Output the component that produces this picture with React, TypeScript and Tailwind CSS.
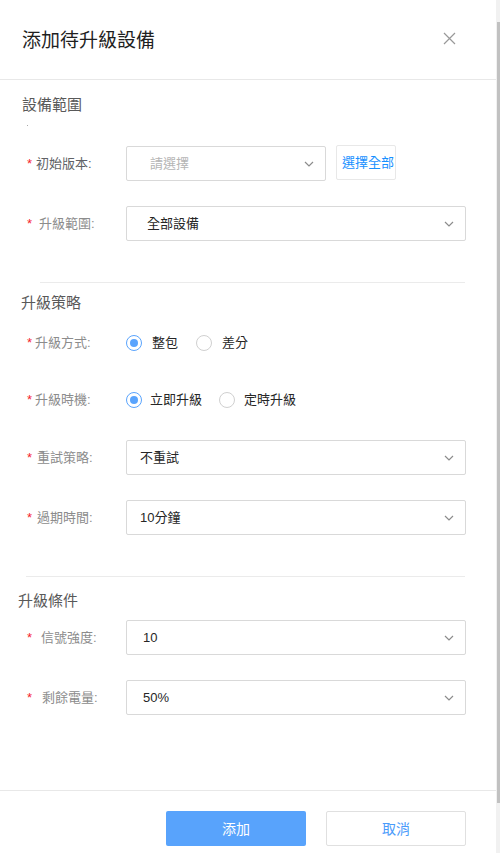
import React from 'react';

function Chevron() {
  return (
    <svg width="10" height="6" viewBox="0 0 10 6" className="shrink-0">
      <polyline points="1,1 5,5 9,1" fill="none" stroke="#8c8c8c" strokeWidth="1.2" />
    </svg>
  );
}

interface SelectProps { value: string; placeholder?: boolean; textPad?: string; width?: string; }

function Select({ value, placeholder, textPad = 'pl-[13px]', width = 'w-[340px]' }: SelectProps) {
  return (
    <div className={`${width} h-[35px] border border-[#d9d9d9] rounded-[2px] flex items-center justify-between pr-[11px] ${textPad}`}>
      <span className={`text-[13px] leading-[20px] ${placeholder ? 'text-[#b5b5b5]' : 'text-[#262626]'}`}>{value}</span>
      <Chevron />
    </div>
  );
}

function Label({ text, gap, dark }: { text: string; gap: string; dark?: boolean }) {
  return (
    <div className="w-[126px] pl-[27px] flex items-center shrink-0">
      <span className="text-[#f5222d] text-[13px] leading-[20px]">*</span>
      <span className={`${gap} text-[13px] leading-[20px] ${dark ? 'text-[#606266]' : 'text-[#8c8c8c]'}`}>{text}</span>
    </div>
  );
}

function Radio({ checked, label, gap = 'ml-[10px]' }: { checked?: boolean; label: string; gap?: string }) {
  return (
    <div className="flex items-center">
      <span
        className={`w-[16px] h-[16px] rounded-full border flex items-center justify-center ${checked ? 'border-[#5aa4fd]' : 'border-[#d0d0d0]'}`}
      >
        {checked && <span className="w-[8px] h-[8px] rounded-full bg-[#5aa4fd]" />}
      </span>
      <span className={`${gap} text-[13px] leading-[20px] text-[#262626]`}>{label}</span>
    </div>
  );
}

export default function App() {
  return (
    <div className="w-[500px] h-[853px] flex bg-white overflow-hidden font-['Liberation_Sans','Noto_Sans_CJK_TC',sans-serif]">
      <div className="w-[496px] h-[853px] flex flex-col">
        {/* Header */}
        <div className="h-[80px] border-b border-[#e8e8e8] flex items-start justify-between pl-[22px] pr-[40px] pt-[29px]">
          <h1 className="text-[19px] leading-[24px] text-[#1f1f1f]">添加待升級設備</h1>
          <svg width="13" height="13" viewBox="0 0 13 13" className="mt-[3px]">
            <path d="M1 1 L12 12 M12 1 L1 12" stroke="#999" strokeWidth="1.2" />
          </svg>
        </div>

        {/* 設備範圍 */}
        <div className="mt-[15px] pl-[22px] text-[15px] leading-[20px] text-[#595959]">設備範圍</div>
        <div className="ml-[27px] mt-[10px] w-[1px] h-[1px] bg-[#aaa]" />
        <div className="mt-[20px] flex items-center h-[35px]">
          <Label text="初始版本:" gap="ml-[4px]" dark />
          <Select value="請選擇" placeholder textPad="pl-[23px]" width="w-[200px]" />
          <button className="ml-[10px] -mt-[2px] w-[60px] h-[35px] border border-[#e8e8e8] rounded-[2px] text-[13px] text-[#1890ff] leading-[20px] pl-[5px] text-left">
            選擇全部
          </button>
        </div>
        <div className="mt-[25px] flex items-center h-[35px]">
          <Label text="升級範圍:" gap="ml-[7px]" />
          <Select value="全部設備" textPad="pl-[20px]" />
        </div>

        <div className="mt-[41px] ml-[40px] w-[425px] border-t border-[#ebebeb]" />

        {/* 升級策略 */}
        <div className="mt-[10px] pl-[21px] text-[15px] leading-[20px] text-[#595959]">升級策略</div>
        <div className="mt-[20px] flex items-center h-[20px]">
          <Label text="升級方式:" gap="ml-[3px]" />
          <div className="flex items-center gap-[18px]">
            <Radio checked label="整包" />
            <Radio label="差分" />
          </div>
        </div>
        <div className="mt-[37px] flex items-center h-[20px]">
          <Label text="升級時機:" gap="ml-[3px]" />
          <div className="flex items-center gap-[17px]">
            <Radio checked label="立即升級" gap="ml-[8px]" />
            <Radio label="定時升級" gap="ml-[9px]" />
          </div>
        </div>
        <div className="mt-[30px] flex items-center h-[35px]">
          <Label text="重試策略:" gap="ml-[5px]" />
          <Select value="不重試" />
        </div>
        <div className="mt-[25px] flex items-center h-[35px]">
          <Label text="過期時間:" gap="ml-[5px]" />
          <Select value="10分鐘" />
        </div>

        <div className="mt-[41px] ml-[26px] w-[439px] border-t border-[#ebebeb]" />

        {/* 升級條件 */}
        <div className="mt-[14px] pl-[18px] text-[15px] leading-[20px] text-[#595959]">升級條件</div>
        <div className="mt-[9px] flex items-center h-[35px]">
          <Label text="信號強度:" gap="ml-[9px]" />
          <Select value="10" textPad="pl-[16px]" />
        </div>
        <div className="mt-[25px] flex items-center h-[35px]">
          <Label text="剩餘電量:" gap="ml-[10px]" />
          <Select value="50%" textPad="pl-[16px]" />
        </div>

        {/* Footer */}
        <div className="mt-[75px] border-t border-[#e8e8e8] pt-[20px] flex justify-end gap-[20px] pr-[30px]">
          <button className="w-[140px] h-[35px] rounded-[2px] bg-[#58a3fc] text-white text-[14px] leading-[20px]">添加</button>
          <button className="w-[140px] h-[35px] rounded-[2px] border border-[#e0e0e0] bg-white text-[#4a9bfb] text-[14px] leading-[20px]">取消</button>
        </div>
      </div>

      {/* scrollbar */}
      <div className="w-[4px] h-[853px] bg-[#f1f1f1] pt-[22px]">
        <div className="ml-[1px] w-[3px] h-[781px] bg-[#c1c1c1]" />
      </div>
    </div>
  );
}
